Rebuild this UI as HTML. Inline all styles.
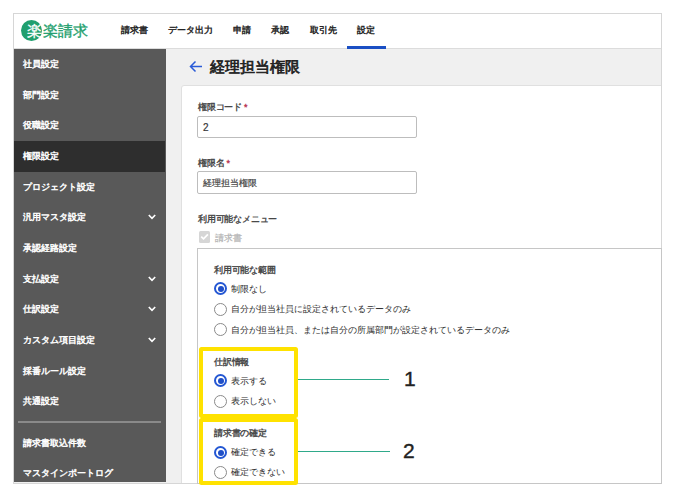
<!DOCTYPE html>
<html><head><meta charset="utf-8">
<style>
*{margin:0;padding:0;box-sizing:border-box}
html,body{width:676px;height:493px;overflow:hidden;background:#fff;font-family:"Liberation Sans",sans-serif;}
.abs{position:absolute}
#frame{position:absolute;left:13px;top:13px;width:649px;height:471px;border:1px solid #d6d6d6;background:#f0f0f0;overflow:hidden}
#header{position:absolute;left:0;top:0;width:100%;height:35px;background:#fff;border-bottom:1px solid #dcdcdc}
.nav{position:absolute;-webkit-text-stroke:0.4px #222;top:11px;font-size:8.8px;font-weight:normal;color:#222;line-height:10px;white-space:nowrap}
#sidebar{position:absolute;left:0;top:35px;width:152px;height:433px;overflow:hidden;background:#595959}
.si{position:absolute;left:0;width:151px;-webkit-text-stroke:0.45px #fff;height:30.65px;color:#fff;font-size:8.8px;font-weight:normal;line-height:30.5px;padding-left:9px;white-space:nowrap}
.si.active{background:#2e2e2e}
.chev{position:absolute;right:9px;top:12.2px;width:8px;height:6px}
#card{position:absolute;left:167px;top:70.6px;width:500px;height:420px;background:#fff;border:1px solid #e0e0e0;border-radius:3px}
.lbl{position:absolute;font-size:9px;letter-spacing:-0.2px;font-weight:normal;color:#444;-webkit-text-stroke:0.35px #444;line-height:10px;white-space:nowrap}
.req{color:#b8324f;-webkit-text-stroke:0.35px #b8324f}
.inp{position:absolute;width:220px;height:23px;border:1px solid #bdbdbd;border-radius:2px;background:#fff;font-size:9px;color:#333;line-height:21px;padding-left:5px;padding-top:1px;-webkit-text-stroke:0.2px #444;color:#444}
.txt{position:absolute;font-size:9px;color:#2e2e2e;line-height:10px;white-space:nowrap}
.radio{position:absolute;width:13px;height:13px;border-radius:50%;border:1.7px solid #8a8a8a;background:#fff}
.radio.on{border:2px solid #2457d3}
.radio.on::after{content:"";position:absolute;left:1.5px;top:1.5px;width:6px;height:6px;border-radius:50%;background:#1f4fc8}
.ybox{position:absolute;border:4px solid #ffe200;border-radius:2.5px}
.gline{position:absolute;height:1px;background:#2fa98a}
.num{position:absolute;font-size:21px;color:#222;line-height:22px;-webkit-text-stroke:0.4px #222}
</style></head><body>
<div id="frame">
  <div id="header">
    <div class="abs" style="left:7px;top:6px;width:21px;height:21px;border-radius:50%;background:#1f9f6e"></div><div class="abs" style="left:12.8px;top:6.5px;color:#fff;font-size:14.5px;line-height:20px;-webkit-text-stroke:0.3px #fff">楽</div>
    <div class="abs" style="left:29px;top:7px;font-size:15px;line-height:20px;color:#1f9f6e;-webkit-text-stroke:0.35px #1f9f6e">楽請求</div>
    <div class="nav" style="left:107px">請求書</div>
    <div class="nav" style="left:154px">データ出力</div>
    <div class="nav" style="left:219px">申請</div>
    <div class="nav" style="left:257px">承認</div>
    <div class="nav" style="left:296px">取引先</div>
    <div class="nav" style="left:343px">設定</div>
    <div class="abs" style="left:333px;top:32px;width:39px;height:2.5px;background:#1a4fc4"></div>
  </div>
  <div id="sidebar">
    <div class="si" style="top:0.0px">社員設定</div>
    <div class="si" style="top:30.65px">部門設定</div>
    <div class="si" style="top:61.3px">役職設定</div>
    <div class="si active" style="top:91.95px">権限設定</div>
    <div class="si" style="top:122.6px">プロジェクト設定</div>
    <div class="si" style="top:153.25px">汎用マスタ設定<svg class="chev" viewBox="0 0 8 6"><path d="M0.8 1 L4 4.4 L7.2 1" fill="none" stroke="#fff" stroke-width="1.6"/></svg></div>
    <div class="si" style="top:183.9px">承認経路設定</div>
    <div class="si" style="top:214.55px">支払設定<svg class="chev" viewBox="0 0 8 6"><path d="M0.8 1 L4 4.4 L7.2 1" fill="none" stroke="#fff" stroke-width="1.6"/></svg></div>
    <div class="si" style="top:245.2px">仕訳設定<svg class="chev" viewBox="0 0 8 6"><path d="M0.8 1 L4 4.4 L7.2 1" fill="none" stroke="#fff" stroke-width="1.6"/></svg></div>
    <div class="si" style="top:275.85px">カスタム項目設定<svg class="chev" viewBox="0 0 8 6"><path d="M0.8 1 L4 4.4 L7.2 1" fill="none" stroke="#fff" stroke-width="1.6"/></svg></div>
    <div class="si" style="top:306.5px">採番ルール設定</div>
    <div class="si" style="top:337.15px">共通設定</div>
    <div class="abs" style="left:4px;top:372px;width:143px;height:1.5px;background:#8a8a8a"></div>
    <div class="si" style="top:378.75px">請求書取込件数</div>
    <div class="si" style="top:408.75px">マスタインポートログ</div>
  </div>
  <!-- title -->
  <svg class="abs" style="left:175px;top:46px" width="14" height="13" viewBox="0 0 14 13"><path d="M1.5 6.5 H13 M6.5 1.5 L1.5 6.5 L6.5 11.5" fill="none" stroke="#2a5bd7" stroke-width="1.5"/></svg>
  <div class="abs" style="left:196px;top:44px;font-size:15px;font-weight:normal;color:#222;line-height:18px;white-space:nowrap;-webkit-text-stroke:0.7px #222">経理担当権限</div>
  <div id="card">
  </div>
</div>
<!-- card contents positioned relative to page -->
<div class="lbl" style="left:198px;top:102px">権限コード<span class="req" style="margin-left:2px">*</span></div>
<div class="inp" style="left:197px;top:115.5px;height:22.5px;font-size:10px;line-height:19px;color:#333">2</div>
<div class="lbl" style="left:198px;top:158px">権限名<span class="req" style="margin-left:2px">*</span></div>
<div class="inp" style="left:197px;top:171px">経理担当権限</div>
<div class="lbl" style="left:198px;top:214px">利用可能なメニュー</div>
<div class="abs" style="left:199px;top:231.3px;width:11.3px;height:11.3px;background:#d6d6d6;border-radius:1.5px"><svg width="11" height="11" viewBox="0 0 11 11" style="position:absolute;left:0;top:0"><path d="M2.2 5.6 L4.5 7.9 L8.9 3.3" fill="none" stroke="#fff" stroke-width="1.7"/></svg></div>
<div class="txt" style="left:215px;top:233px;color:#b3b3b3;-webkit-text-stroke:0.2px #b3b3b3">請求書</div>
<div class="abs" style="left:197px;top:248px;width:465px;height:236px;border:1px solid #c6c6c6"></div>
<div class="lbl" style="left:214px;top:265px">利用可能な範囲</div>
<div class="radio on" style="left:214px;top:282px"></div>
<div class="txt" style="left:231px;top:284px">制限なし</div>
<div class="radio" style="left:214px;top:302.5px"></div>
<div class="txt" style="left:231px;top:304px">自分が担当社員に設定されているデータのみ</div>
<div class="radio" style="left:214px;top:323px"></div>
<div class="txt" style="left:231px;top:325px">自分が担当社員、または自分の所属部門が設定されているデータのみ</div>

<div class="lbl" style="left:214px;top:357px">仕訳情報</div>
<div class="radio on" style="left:214px;top:374.3px"></div>
<div class="txt" style="left:231px;top:376px">表示する</div>
<div class="radio" style="left:214px;top:394.8px"></div>
<div class="txt" style="left:231px;top:396px">表示しない</div>

<div class="lbl" style="left:214px;top:428px">請求書の確定</div>
<div class="radio on" style="left:214px;top:446.2px"></div>
<div class="txt" style="left:231px;top:447px">確定できる</div>
<div class="radio" style="left:214px;top:465.8px"></div>
<div class="txt" style="left:231px;top:467px">確定できない</div>

<div class="ybox" style="left:199px;top:347px;width:99px;height:70.5px"></div>
<div class="ybox" style="left:199px;top:417.5px;width:99px;height:67.5px"></div>
<div class="gline" style="left:298px;top:379px;width:91px"></div>
<div class="gline" style="left:298px;top:451px;width:92px"></div>
<div class="num" style="left:404px;top:368px">1</div>
<div class="num" style="left:403px;top:440px">2</div>
</body></html>
